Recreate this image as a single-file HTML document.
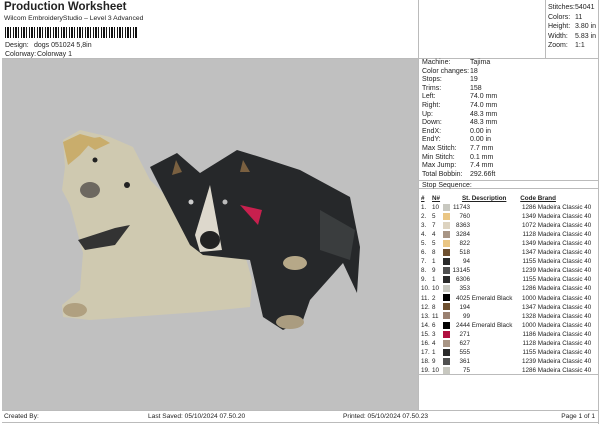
<!DOCTYPE html><html><head><style>
body{margin:0;width:600px;height:424px;background:#fff;font-family:"Liberation Sans",sans-serif;color:#222;position:relative;overflow:hidden;font-size:7px}
.a{position:absolute;white-space:nowrap}
.ln{position:absolute;background:#bbb}
table{border-collapse:collapse;font-size:6.3px;table-layout:fixed}
td{padding:0;height:9.05px;line-height:9px;white-space:nowrap;overflow:hidden}
.r{text-align:right}
.sw{display:inline-block;width:7px;height:7px;vertical-align:middle}
</style></head><body>
<div class="a" style="left:4px;top:1px;font-size:11.5px;font-weight:bold">Production Worksheet</div>
<div class="a" style="left:4px;top:15px;font-size:6.8px">Wilcom EmbroideryStudio – Level 3 Advanced</div>
<div class="a" style="left:5px;top:27px;height:11px;width:132px;background:repeating-linear-gradient(90deg,#111 0 1px,#fff 1px 2px,#111 2px 4px,#fff 4px 5px,#111 5px 6px,#fff 6px 8px)"></div>
<div class="a" style="left:5px;top:42px">Design:</div><div class="a" style="left:34px;top:42px">dogs 051024 5,8in</div>
<div class="a" style="left:5px;top:51px">Colorway:</div><div class="a" style="left:37px;top:51px">Colorway 1</div>
<div class="ln" style="left:2px;top:58px;width:596px;height:1px"></div>
<div class="a" style="left:2px;top:59px;width:416px;height:351px;background:#c0c0c0"></div>
<svg class="a" style="left:0;top:0" width="420" height="410">
<path d="M63,140 L80,130 L110,137 L133,147 L150,180 L200,230 L245,255 L252,280 L250,307 L200,312 L90,320 L63,317 L62,305 L80,290 L83,253 L70,205 L62,190 L65,167Z" fill="#cfc9b0"/>
<path d="M63,142 L80,134 L95,138 L80,155 L68,165Z" fill="#c9ad6c"/>
<path d="M80,140 L100,137 L110,143 L95,150Z" fill="#c9ad6c"/>
<ellipse cx="90" cy="190" rx="10" ry="8" fill="#6d6860"/>
<path d="M78,240 L115,228 L130,225 L115,245 L85,250Z" fill="#333"/>
<path d="M150,167 L177,153 L200,173 L237,150 L260,157 L300,170 L350,197 L360,247 L357,293 L343,263 L310,300 L303,320 L283,330 L263,317 L250,260 L203,255 L190,245 L160,187Z" fill="#26282a"/>
<path d="M320,210 L355,230 L350,260 L320,250Z" fill="#3a3d3e"/>
<path d="M210,185 L222,250 L200,252 L195,235Z" fill="#ddd8cc"/>
<ellipse cx="210" cy="240" rx="10" ry="9" fill="#222"/>
<path d="M240,205 L262,210 L258,225Z" fill="#c8204e"/>
<ellipse cx="295" cy="263" rx="12" ry="7" fill="#b6a888"/>
<ellipse cx="290" cy="322" rx="14" ry="7" fill="#aa9c80"/>
<ellipse cx="75" cy="310" rx="12" ry="7" fill="#b0a080"/>
<path d="M176,160 L182,172 L172,175Z" fill="#7a6040"/><path d="M243,160 L250,172 L240,172Z" fill="#7a6040"/>
<circle cx="127" cy="185" r="3" fill="#222"/><circle cx="95" cy="160" r="2.5" fill="#222"/>
<circle cx="191" cy="202" r="2.5" fill="#ccc"/><circle cx="225" cy="202" r="2.5" fill="#bbb"/>
</svg>
<div class="ln" style="left:418px;top:0;width:1px;height:410px"></div>
<div class="ln" style="left:545px;top:0;width:1px;height:58px"></div>
<div class="a" style="left:548px;top:3px;line-height:9.6px">Stitches:<br>Colors:<br>Height:<br>Width:<br>Zoom:</div>
<div class="a" style="left:575px;top:3px;line-height:9.6px">54041<br>11<br>3.80 in<br>5.83 in<br>1:1</div>
<div class="a" style="left:422px;top:59px;line-height:8.6px">Machine:<br>Color changes:<br>Stops:<br>Trims:<br>Left:<br>Right:<br>Up:<br>Down:<br>EndX:<br>EndY:<br>Max Stitch:<br>Min Stitch:<br>Max Jump:<br>Total Bobbin:</div>
<div class="a" style="left:470px;top:59px;line-height:8.6px">Tajima<br>18<br>19<br>158<br>74.0 mm<br>74.0 mm<br>48.3 mm<br>48.3 mm<br>0.00 in<br>0.00 in<br>7.7 mm<br>0.1 mm<br>7.4 mm<br>292.66ft</div>
<div class="ln" style="left:418px;top:180px;width:180px;height:1px"></div>
<div class="ln" style="left:418px;top:188px;width:180px;height:1px"></div>
<div class="a" style="left:422px;top:182px">Stop Sequence:</div>
<table class="a" style="left:421px;top:194px;width:177px">
<colgroup><col style="width:11px"><col style="width:11px"><col style="width:9px"><col style="width:18px"><col style="width:47px"><col style="width:19px"><col style="width:62px"></colgroup>
<tr style="font-weight:bold;text-decoration:underline"><td>#</td><td>N#</td><td></td><td class="r">St.</td><td>&nbsp;Description</td><td class="r">Code</td><td>&nbsp;Brand</td></tr>
<tr><td>1.</td><td>10</td><td><span class="sw" style="background:#c8c8c0"></span></td><td class="r">11743</td><td></td><td class="r">1286</td><td>&nbsp;Madeira Classic 40</td></tr>
<tr><td>2.</td><td>5</td><td><span class="sw" style="background:#eac684"></span></td><td class="r">760</td><td></td><td class="r">1349</td><td>&nbsp;Madeira Classic 40</td></tr>
<tr><td>3.</td><td>7</td><td><span class="sw" style="background:#ddd3c0"></span></td><td class="r">8363</td><td></td><td class="r">1072</td><td>&nbsp;Madeira Classic 40</td></tr>
<tr><td>4.</td><td>4</td><td><span class="sw" style="background:#a89585"></span></td><td class="r">3284</td><td></td><td class="r">1128</td><td>&nbsp;Madeira Classic 40</td></tr>
<tr><td>5.</td><td>5</td><td><span class="sw" style="background:#eac684"></span></td><td class="r">822</td><td></td><td class="r">1349</td><td>&nbsp;Madeira Classic 40</td></tr>
<tr><td>6.</td><td>8</td><td><span class="sw" style="background:#6e5030"></span></td><td class="r">518</td><td></td><td class="r">1347</td><td>&nbsp;Madeira Classic 40</td></tr>
<tr><td>7.</td><td>1</td><td><span class="sw" style="background:#2a2a2a"></span></td><td class="r">94</td><td></td><td class="r">1155</td><td>&nbsp;Madeira Classic 40</td></tr>
<tr><td>8.</td><td>9</td><td><span class="sw" style="background:#505050"></span></td><td class="r">13145</td><td></td><td class="r">1239</td><td>&nbsp;Madeira Classic 40</td></tr>
<tr><td>9.</td><td>1</td><td><span class="sw" style="background:#2a2a2a"></span></td><td class="r">6306</td><td></td><td class="r">1155</td><td>&nbsp;Madeira Classic 40</td></tr>
<tr><td>10.</td><td>10</td><td><span class="sw" style="background:#c8c8c0"></span></td><td class="r">353</td><td></td><td class="r">1286</td><td>&nbsp;Madeira Classic 40</td></tr>
<tr><td>11.</td><td>2</td><td><span class="sw" style="background:#000"></span></td><td class="r">4025</td><td>&nbsp;Emerald Black</td><td class="r">1000</td><td>&nbsp;Madeira Classic 40</td></tr>
<tr><td>12.</td><td>8</td><td><span class="sw" style="background:#6e5030"></span></td><td class="r">194</td><td></td><td class="r">1347</td><td>&nbsp;Madeira Classic 40</td></tr>
<tr><td>13.</td><td>11</td><td><span class="sw" style="background:#9a8070"></span></td><td class="r">99</td><td></td><td class="r">1328</td><td>&nbsp;Madeira Classic 40</td></tr>
<tr><td>14.</td><td>6</td><td><span class="sw" style="background:#000"></span></td><td class="r">2444</td><td>&nbsp;Emerald Black</td><td class="r">1000</td><td>&nbsp;Madeira Classic 40</td></tr>
<tr><td>15.</td><td>3</td><td><span class="sw" style="background:#b01040"></span></td><td class="r">271</td><td></td><td class="r">1186</td><td>&nbsp;Madeira Classic 40</td></tr>
<tr><td>16.</td><td>4</td><td><span class="sw" style="background:#a89585"></span></td><td class="r">627</td><td></td><td class="r">1128</td><td>&nbsp;Madeira Classic 40</td></tr>
<tr><td>17.</td><td>1</td><td><span class="sw" style="background:#2a2a2a"></span></td><td class="r">555</td><td></td><td class="r">1155</td><td>&nbsp;Madeira Classic 40</td></tr>
<tr><td>18.</td><td>9</td><td><span class="sw" style="background:#505050"></span></td><td class="r">361</td><td></td><td class="r">1239</td><td>&nbsp;Madeira Classic 40</td></tr>
<tr><td>19.</td><td>10</td><td><span class="sw" style="background:#c8c8c0"></span></td><td class="r">75</td><td></td><td class="r">1286</td><td>&nbsp;Madeira Classic 40</td></tr>
</table>
<div class="ln" style="left:418px;top:374px;width:180px;height:1px"></div>
<div class="ln" style="left:2px;top:410px;width:596px;height:1px"></div>
<div class="ln" style="left:598px;top:0;width:1px;height:424px"></div>
<div class="ln" style="left:2px;top:422px;width:596px;height:1px"></div>
<div class="a" style="left:4px;top:413px;font-size:6.6px">Created By:</div>
<div class="a" style="left:148px;top:413px;font-size:6.6px">Last Saved: 05/10/2024 07.50.20</div>
<div class="a" style="left:343px;top:413px;font-size:6.6px">Printed: 05/10/2024 07.50.23</div>
<div class="a" style="right:5px;top:413px;font-size:6.6px">Page 1 of 1</div>
</body></html>
